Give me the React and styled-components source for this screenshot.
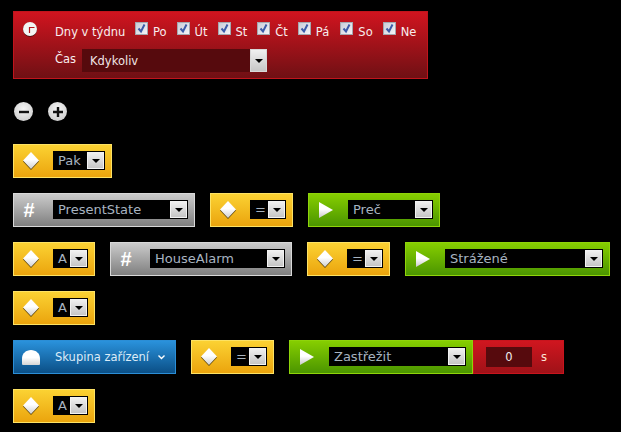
import styled, { createGlobalStyle } from "styled-components";

const GlobalStyle = createGlobalStyle`
  html, body {
    margin: 0;
    background: #000;
    font-family: "DejaVu Sans", Verdana, sans-serif;
  }
`;

const DAYS = [
  { name: "Po", gap: 10 },
  { name: "Út", gap: 10 },
  { name: "St", gap: 10 },
  { name: "Čt", gap: 10 },
  { name: "Pá", gap: 11 },
  { name: "So", gap: 10 },
  { name: "Ne", gap: 0 },
];

const chipColors = {
  yellow: { top: "#fbd233", bottom: "#eba40d", border: "#fde264" },
  gray: { top: "#cbcbcb", bottom: "#7f7f7f", border: "#d8d8d8" },
  green: { top: "#86ce00", bottom: "#4b9500", border: "#8fd40a" },
  blue: { top: "#2a92dc", bottom: "#0b4f86", border: "#2b8ed6" },
  red: { top: "#d0161f", bottom: "#a01218", border: "#c8141d" },
};

const Page = styled.div`
  padding: 11px 13px;
`;

const Panel = styled.div`
  width: 415px;
  height: 68px;
  box-sizing: border-box;
  border: 1px solid #c0141c;
  background: linear-gradient(#d1141f, #6f1014);
  display: flex;
  padding: 9px 0 0 9px;
`;

const ClockIcon = styled.svg`
  width: 14px;
  height: 15px;
  margin-top: 1px;
  flex: none;
`;

const PanelBody = styled.div`
  margin-left: 18px;
  display: flex;
  flex-direction: column;
`;

const DaysRow = styled.div`
  display: flex;
  align-items: flex-start;
  height: 19px;
`;

const PanelLabel = styled.span`
  font-size: 11.5px;
  line-height: 14px;
  color: #f8eeee;
`;

const DaysLabel = styled(PanelLabel)`
  width: 80px;
  margin-top: 4px;
`;

const Day = styled.label`
  display: flex;
  align-items: flex-start;
  margin-right: ${(p) => p.$gap}px;
`;

const DayName = styled(PanelLabel)`
  margin: 4px 0 0 5px;
`;

const Checkbox = styled.span`
  width: 13px;
  height: 13px;
  box-sizing: border-box;
  margin-top: 1px;
  border: 1px solid #a4a8b0;
  background: linear-gradient(135deg, #c8ccd8, #f4f4f8);
  display: flex;
  flex: none;
`;

const TimeRow = styled.div`
  display: flex;
  align-items: flex-start;
  margin-top: 9px;
`;

const TimeLabel = styled(PanelLabel)`
  width: 27px;
  margin-top: 3px;
`;

const TimeSelect = styled.div`
  width: 185px;
  height: 23px;
  display: flex;
  background: #560a0d;
`;

const TimeValue = styled.span`
  flex: 1;
  padding-left: 8px;
  font-size: 11.5px;
  line-height: 25px;
  color: #f0e6e6;
`;

const Tools = styled.div`
  display: flex;
  gap: 15px;
  margin: 23px 0 23px 1px;
`;

const RoundButton = styled.button`
  width: 19px;
  height: 19px;
  padding: 0;
  border: 0;
  border-radius: 50%;
  background: radial-gradient(circle at 50% 35%, #f6f6f6, #c4c4c4);
  display: flex;
  align-items: center;
  justify-content: center;
`;

const Rows = styled.div`
  display: flex;
  flex-direction: column;
  gap: 15px;
`;

const Row = styled.div`
  display: flex;
  gap: 15px;
`;

const RowGroup = styled.div`
  display: flex;
`;

const Chip = styled.div`
  height: 34px;
  box-sizing: border-box;
  border: 1px solid ${(p) => chipColors[p.$color].border};
  background: linear-gradient(${(p) => chipColors[p.$color].top}, ${(p) => chipColors[p.$color].bottom});
  display: flex;
  align-items: flex-start;
  padding: 6px 6px 0 0;
`;

const IconSlot = styled.span`
  width: 39px;
  height: 20px;
  box-sizing: border-box;
  padding-right: ${(p) => p.$inset}px;
  flex: none;
  display: flex;
  align-items: center;
  justify-content: center;
`;

const Hash = styled.span`
  font-family: "Liberation Sans", Arial, sans-serif;
  font-weight: bold;
  font-size: 20px;
  line-height: 20px;
  color: #fff;
`;

const Select = styled.div`
  width: ${(p) => p.$width}px;
  height: 19px;
  box-sizing: border-box;
  background: #000;
  display: flex;
  align-items: center;
  padding-right: 1px;
`;

const SelectValue = styled.span`
  flex: 1;
  padding-left: 5px;
  font-size: 13px;
  line-height: 19px;
  color: #a8b4c0;
  white-space: nowrap;
  overflow: hidden;
`;

const ArrowButton = styled.span`
  width: 17px;
  height: 17px;
  box-sizing: border-box;
  border: 1px solid #f2f2f2;
  background: linear-gradient(#f0f0f0, #c6c6c6);
  display: flex;
  align-items: center;
  justify-content: center;
  flex: none;
`;

const TimeArrow = styled(ArrowButton)`
  height: 23px;
  border-color: #d8d8d8;
`;

const Arrow = styled.span`
  width: 0;
  height: 0;
  border-left: 4px solid transparent;
  border-right: 4px solid transparent;
  border-top: 4px solid #000;
`;

const GroupChip = styled(Chip)`
  width: 163px;
  padding: 0;
  align-items: center;
`;

const GroupName = styled.span`
  font-size: 11.5px;
  color: #dcecf8;
  margin-left: 2px;
  white-space: nowrap;
`;

const Chevron = styled.svg`
  width: 7px;
  height: 5px;
  margin-left: 9px;
`;

const SecondsChip = styled(Chip)`
  width: 91px;
  padding: 6px 0 0 12px;
`;

const SecondsInput = styled.div`
  width: 46px;
  height: 20px;
  background: #560a0d;
  color: #eee;
  font-size: 11.5px;
  line-height: 20px;
  text-align: center;
`;

const SecondsUnit = styled.span`
  margin-left: 9px;
  font-size: 11.5px;
  line-height: 20px;
  color: #fde8d8;
`;

function Diamond() {
  return (
    <svg width="16" height="18" viewBox="0 0 16 18">
      <defs>
        <linearGradient id="diamondFill" x1="0" y1="0" x2="0" y2="1">
          <stop offset="0.45" stopColor="#ffffff" />
          <stop offset="1" stopColor="#cfcfcf" />
        </linearGradient>
      </defs>
      <path d="M8 1 16 9.5 8 18 0 9.5z" fill="#5a4208" />
      <path d="M8 0 16 8.5 8 17 0 8.5z" fill="url(#diamondFill)" />
    </svg>
  );
}

function Play() {
  return (
    <svg width="14" height="16" viewBox="0 0 14 16">
      <defs>
        <linearGradient id="playFill" x1="0" y1="0" x2="0" y2="1">
          <stop offset="0.45" stopColor="#ffffff" />
          <stop offset="1" stopColor="#c8c8c8" />
        </linearGradient>
      </defs>
      <path d="M0 0 14 8 0 16z" fill="url(#playFill)" />
    </svg>
  );
}

function Dome() {
  return (
    <svg width="18" height="15" viewBox="0 0 18 15">
      <defs>
        <linearGradient id="domeFill" x1="0" y1="0" x2="0" y2="1">
          <stop offset="0.5" stopColor="#ffffff" />
          <stop offset="1" stopColor="#d4d4d4" />
        </linearGradient>
      </defs>
      <path d="M0 14V8.5C0 3.5 4 0 9 0s9 3.5 9 8.5V14q0 1-1 1H1q-1 0-1-1z" fill="url(#domeFill)" />
    </svg>
  );
}

function Dropdown({ width, value }) {
  return (
    <Select $width={width}>
      <SelectValue>{value}</SelectValue>
      <ArrowButton>
        <Arrow />
      </ArrowButton>
    </Select>
  );
}

function ConditionChip({ value = "A", width = 35 }) {
  return (
    <Chip $color="yellow">
      <IconSlot $inset={6}>
        <Diamond />
      </IconSlot>
      <Dropdown width={width} value={value} />
    </Chip>
  );
}

function VariableChip({ value }) {
  return (
    <Chip $color="gray">
      <IconSlot $inset={9}>
        <Hash>#</Hash>
      </IconSlot>
      <Dropdown width={135} value={value} />
    </Chip>
  );
}

function ActionChip({ value, width }) {
  return (
    <Chip $color="green">
      <IconSlot $inset={6}>
        <Play />
      </IconSlot>
      <Dropdown width={width} value={value} />
    </Chip>
  );
}

export default function App() {
  return (
    <Page>
      <GlobalStyle />
      <Panel>
        <ClockIcon viewBox="0 0 14 15">
          <ellipse cx="7" cy="7.6" rx="7" ry="7.2" fill="#3a0a0a" />
          <circle cx="7" cy="7" r="7" fill="#f4f4f4" />
          <path d="M6.5 11V5.5h5" fill="none" stroke="#b5141c" strokeWidth="1.2" />
        </ClockIcon>
        <PanelBody>
          <DaysRow>
            <DaysLabel>Dny v týdnu</DaysLabel>
            {DAYS.map((day) => (
              <Day key={day.name} $gap={day.gap}>
                <Checkbox>
                  <svg width="11" height="11" viewBox="0 0 11 11">
                    <path d="M2.5 5.5 5 8.5 8.5 1.5" fill="none" stroke="#3c5aa8" strokeWidth="2" />
                  </svg>
                </Checkbox>
                <DayName>{day.name}</DayName>
              </Day>
            ))}
          </DaysRow>
          <TimeRow>
            <TimeLabel>Čas</TimeLabel>
            <TimeSelect>
              <TimeValue>Kdykoliv</TimeValue>
              <TimeArrow>
                <Arrow />
              </TimeArrow>
            </TimeSelect>
          </TimeRow>
        </PanelBody>
      </Panel>

      <Tools>
        <RoundButton aria-label="Odebrat">
          <svg width="12" height="12" viewBox="0 0 12 12">
            <path d="M1 6h10" stroke="#111" strokeWidth="2.4" />
          </svg>
        </RoundButton>
        <RoundButton aria-label="Přidat">
          <svg width="12" height="12" viewBox="0 0 12 12">
            <path d="M1 6h10M6 1v10" stroke="#111" strokeWidth="2.4" />
          </svg>
        </RoundButton>
      </Tools>

      <Rows>
        <Row>
          <ConditionChip value="Pak" width={52} />
        </Row>
        <Row>
          <VariableChip value="PresentState" />
          <ConditionChip value="=" width={36} />
          <ActionChip value="Preč" width={85} />
        </Row>
        <Row>
          <ConditionChip />
          <VariableChip value="HouseAlarm" />
          <ConditionChip value="=" width={36} />
          <ActionChip value="Strážené" width={158} />
        </Row>
        <Row>
          <ConditionChip />
        </Row>
        <Row>
          <GroupChip $color="blue">
            <IconSlot $inset={6}>
              <Dome />
            </IconSlot>
            <GroupName>Skupina zařízení</GroupName>
            <Chevron viewBox="0 0 7 5">
              <path d="M.5 .5 3.5 3.5 6.5 .5" fill="none" stroke="#fff" strokeWidth="1.4" />
            </Chevron>
          </GroupChip>
          <ConditionChip value="=" width={36} />
          <RowGroup>
            <ActionChip value="Zastřežit" width={137} />
            <SecondsChip $color="red">
              <SecondsInput>0</SecondsInput>
              <SecondsUnit>s</SecondsUnit>
            </SecondsChip>
          </RowGroup>
        </Row>
        <Row>
          <ConditionChip />
        </Row>
      </Rows>
    </Page>
  );
}
